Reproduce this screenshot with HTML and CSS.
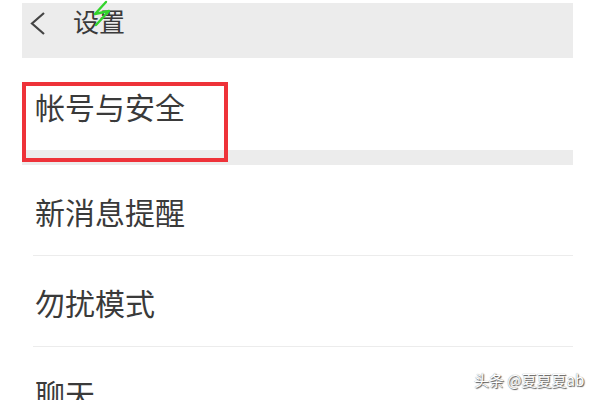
FILE: index.html
```html
<!DOCTYPE html>
<html lang="zh-CN">
<head>
  <meta charset="UTF-8">
  <meta name="viewport" content="width=device-width, initial-scale=1.0">
  <title>设置</title>
  <link rel="stylesheet" href="styles.css">
</head>
<body>
  <div class="screen">
    <div class="topbar">
      <svg class="back" width="18" height="24" viewBox="0 0 18 24">
        <path d="M15 1 L3 11.5 L15 22" fill="none" stroke="#444" stroke-width="2.2"/>
      </svg>
      <span class="title">设置</span>
    </div>

    <div class="row first">帐号与安全</div>
    <div class="gap"></div>
    <div class="row">新消息提醒</div>
    <div class="row">勿扰模式</div>
    <div class="row">聊天</div>
  </div>

  <!-- annotations on top of the screenshot -->
  <div class="highlight"></div>
  <svg class="scribble" width="26" height="28" viewBox="0 0 26 28">
    <path d="M19 2 L8 14 L22 11 L9 25" fill="none" stroke="#33d42c" stroke-width="2.4" stroke-linecap="round" stroke-linejoin="round"/>
  </svg>
  <div class="watermark">头条 @夏夏夏ab</div>
</body>
</html>
```

FILE: styles.css
```css
body {
  margin: 0;
  background: #fff;
  font-family: "Noto Sans CJK SC", "Noto Sans", sans-serif;
  color: #3a3a3a;
  height: 400px;
  overflow: hidden;
  position: relative;
}
.screen {
  width: 551px;
  margin-left: 22px;
  padding-top: 3px;
}
.topbar {
  height: 55px;
  background: #ececec;
  display: flex;
  align-items: flex-start;
  padding: 3px 0 0 7px;
  box-sizing: border-box;
}
.back {
  margin-top: 6px;
}
.title {
  font-size: 26px;
  line-height: 30px;
  margin-left: 26px;
  color: #3a3a3a;
}
.row {
  height: 91px;
  display: flex;
  align-items: center;
  padding-left: 13px;
  font-size: 30px;
  line-height: 30px;
  position: relative;
}
.row::after {
  content: "";
  position: absolute;
  left: 11px;
  right: 0;
  bottom: 0;
  height: 1px;
  background: #ececec;
}
.row.first {
  height: 92px;
  align-items: flex-start;
  padding-top: 33px;
  box-sizing: border-box;
}
.row.first::after {
  display: none;
}
.gap {
  height: 15px;
  background: #ececec;
}
.highlight {
  position: absolute;
  left: 22px;
  top: 82px;
  width: 206px;
  height: 80px;
  border: 4px solid #ee3239;
  box-sizing: border-box;
}
.scribble {
  position: absolute;
  left: 87px;
  top: 0;
}
.watermark {
  position: absolute;
  left: 474px;
  top: 369px;
  font-size: 15px;
  color: #fff;
  text-shadow: 1px 1px 1px #555, 0 0 1px #777;
}
```
